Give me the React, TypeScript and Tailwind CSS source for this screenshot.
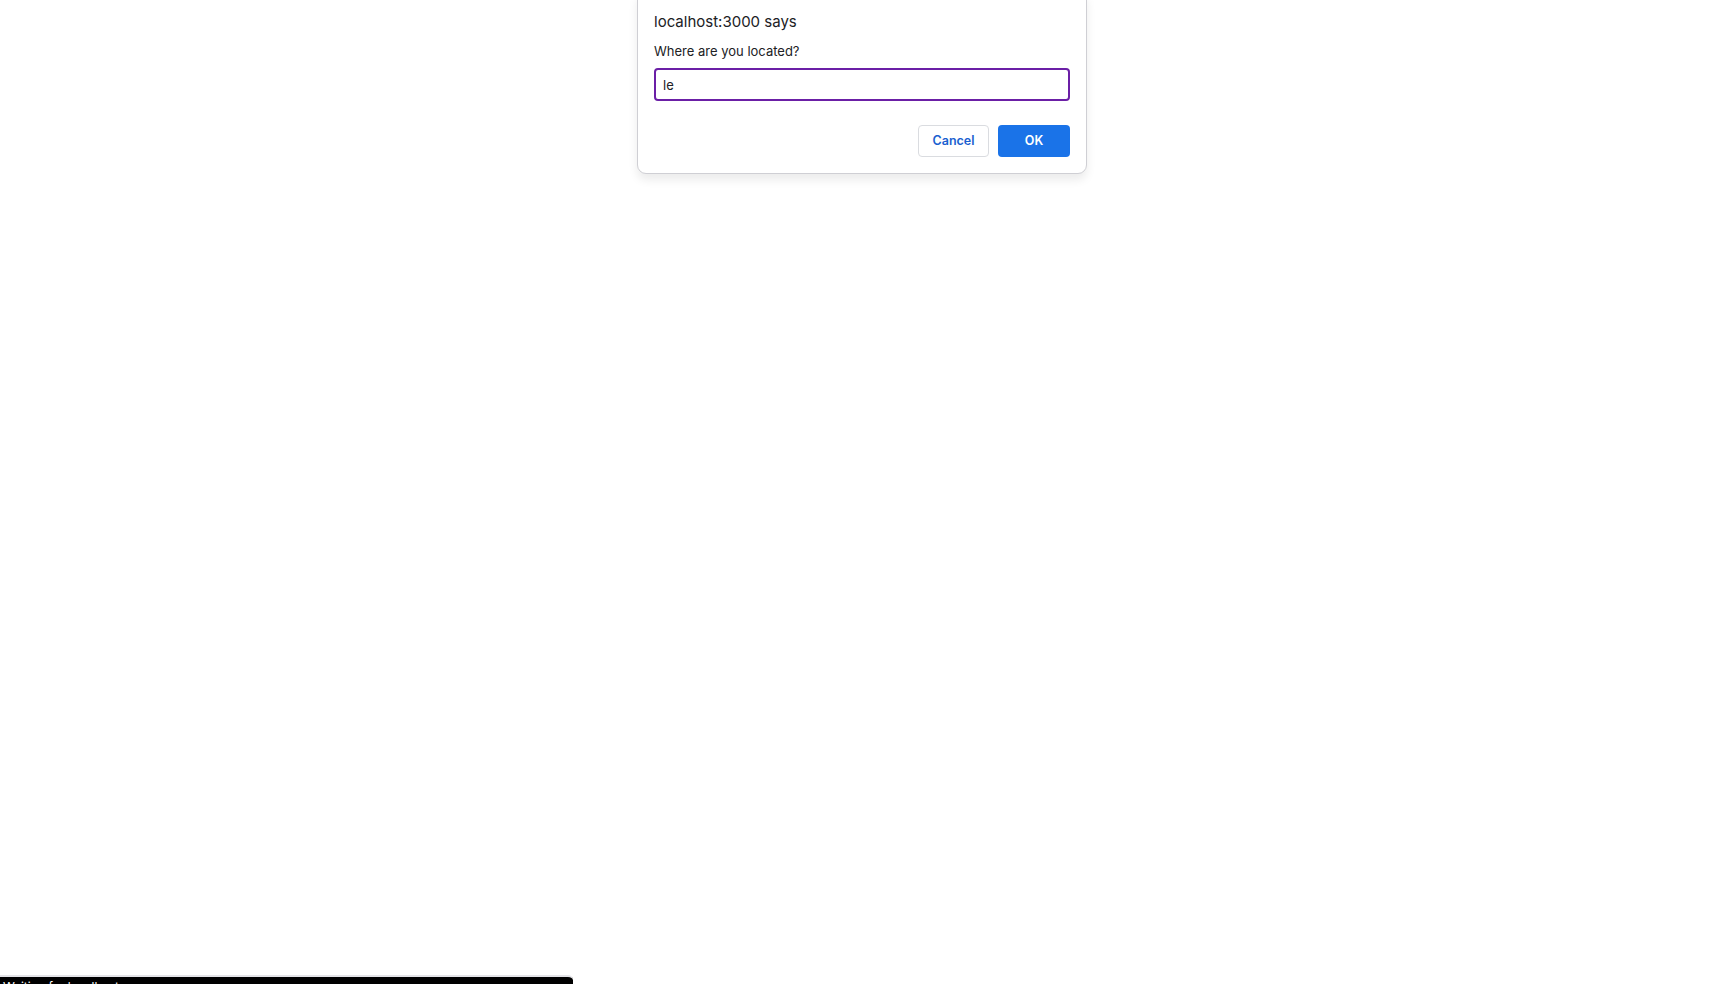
import React, { useState } from 'react';

const App: React.FC = () => {
  const [location, setLocation] = useState('le');

  return (
    <div className="relative h-[984px] w-full overflow-hidden bg-white font-['Inter','Liberation_Sans',sans-serif]">
      {/* Prompt dialog */}
      <div className="absolute left-[637px] top-[-10px] w-[450px] rounded-[9px] border border-[#cfcfd4] bg-white px-[16px] pb-[16px] pt-[21px] shadow-[0_6px_10px_rgba(0,0,0,0.08)]">
        <div className="text-[15px] leading-[20px] text-[#202124]">localhost:3000 says</div>
        <div className="mt-[11px] text-[13px] leading-[16px] text-[#202124]">Where are you located?</div>
        <input
          autoFocus
          value={location}
          onChange={(e) => setLocation(e.target.value)}
          className="mt-[9px] h-[33px] w-full rounded-[4px] border-2 border-[#6b1fa6] px-[7px] text-[13px] text-[#202124] outline-none"
        />
        <div className="mt-[24px] flex justify-end gap-[9px]">
          <button className="h-[32px] w-[71px] rounded-[4px] border border-[#dadce0] bg-white text-[12.5px] font-semibold text-[#1a5fd0]">
            Cancel
          </button>
          <button className="h-[32px] w-[72px] rounded-[4px] bg-[#1a73e8] text-[12.5px] font-semibold text-white">
            OK
          </button>
        </div>
      </div>

      {/* Status bubble */}
      <div className="absolute bottom-0 left-0 h-[9px] w-[573px] overflow-hidden rounded-tr-[5px] border-t-2 border-[#e4e4e8] bg-black">
        <div className="pl-[3px] pt-[3px] text-[12px] leading-[14px] text-white">Waiting for localhost...</div>
      </div>
    </div>
  );
};

export default App;
